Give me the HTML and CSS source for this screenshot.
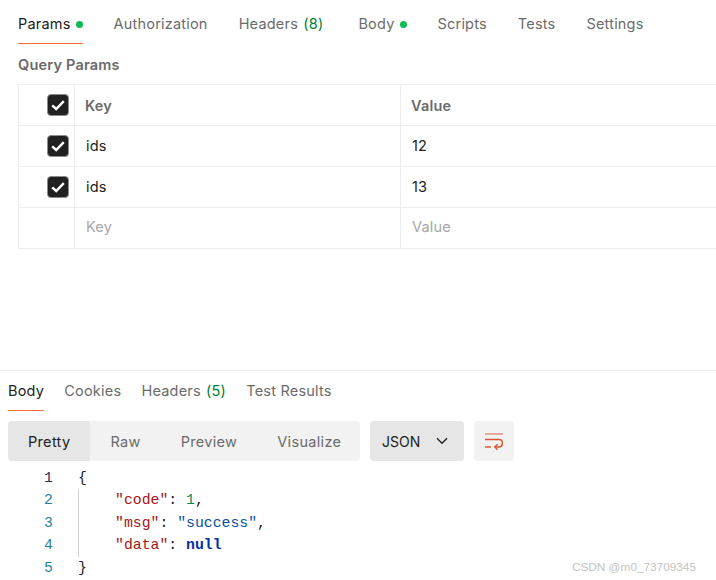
FILE: index.html
```html
<!DOCTYPE html>
<html lang="en">
<head>
<meta charset="UTF-8">
<meta name="viewport" content="width=device-width, initial-scale=1.0">
<title>Params</title>
<link rel="stylesheet" href="styles.css">
</head>
<body>

<section class="request">
  <nav class="tabs">
    <a class="tab active">Params<span class="dot"></span></a>
    <a class="tab">Authorization</a>
    <a class="tab headers">Headers <span class="count">(8)</span></a>
    <a class="tab">Body<span class="dot"></span></a>
    <a class="tab">Scripts</a>
    <a class="tab">Tests</a>
    <a class="tab">Settings</a>
  </nav>

  <h3 class="section-title">Query Params</h3>

  <div class="params">
    <div class="row head">
      <div class="cell check"><span class="checkbox"><svg width="14" height="14" viewBox="0 0 14 14"><path d="M1.2 7.4 L5.2 11 L12.8 3.2" fill="none" stroke="#fff" stroke-width="2.4"/></svg></span></div>
      <div class="cell key">Key</div>
      <div class="cell value">Value</div>
    </div>
    <div class="row">
      <div class="cell check"><span class="checkbox"><svg width="14" height="14" viewBox="0 0 14 14"><path d="M1.2 7.4 L5.2 11 L12.8 3.2" fill="none" stroke="#fff" stroke-width="2.4"/></svg></span></div>
      <div class="cell key">ids</div>
      <div class="cell value">12</div>
    </div>
    <div class="row">
      <div class="cell check"><span class="checkbox"><svg width="14" height="14" viewBox="0 0 14 14"><path d="M1.2 7.4 L5.2 11 L12.8 3.2" fill="none" stroke="#fff" stroke-width="2.4"/></svg></span></div>
      <div class="cell key">ids</div>
      <div class="cell value">13</div>
    </div>
    <div class="row empty">
      <div class="cell check"></div>
      <div class="cell key">Key</div>
      <div class="cell value">Value</div>
    </div>
  </div>
</section>

<section class="response">
  <nav class="tabs small">
    <a class="tab active">Body</a>
    <a class="tab">Cookies</a>
    <a class="tab">Headers <span class="count">(5)</span></a>
    <a class="tab">Test Results</a>
  </nav>

  <div class="toolbar">
    <div class="segments">
      <span class="segment selected">Pretty</span>
      <span class="segment">Raw</span>
      <span class="segment">Preview</span>
      <span class="segment">Visualize</span>
    </div>
    <div class="format">JSON
      <svg width="12" height="8" viewBox="0 0 12 8"><path d="M1 1.2 L6 6.2 L11 1.2" fill="none" stroke="#212121" stroke-width="1.4"/></svg>
    </div>
    <div class="wrap">
      <svg width="18" height="17" viewBox="0 0 18 17"><path d="M0 1 H18" stroke="#e08a6c" stroke-width="1.4" fill="none"/><path d="M0 6.5 H14 C18.5 6.5 18.5 14 14 14 H10" stroke="#d9532c" stroke-width="1.4" fill="none"/><path d="M12.5 11.3 L9.8 14 L12.5 16.7" stroke="#d9532c" stroke-width="1.4" fill="none"/><path d="M0 14 H6" stroke="#d9532c" stroke-width="1.4" fill="none"/></svg>
    </div>
  </div>

  <div class="code">
    <div class="line"><span class="num first">1</span><span class="text">{</span></div>
    <div class="line"><span class="num">2</span><span class="text indent"><span class="prop">"code"</span>: <span class="number">1</span>,</span></div>
    <div class="line"><span class="num">3</span><span class="text indent"><span class="prop">"msg"</span>: <span class="string">"success"</span>,</span></div>
    <div class="line"><span class="num">4</span><span class="text indent"><span class="prop">"data"</span>: <span class="null">null</span></span></div>
    <div class="line"><span class="num">5</span><span class="text">}</span></div>
  </div>
</section>

<div class="watermark">CSDN @m0_73709345</div>

</body>
</html>
```

FILE: styles.css
```css
html, body {
  height: 100%;
}
body {
  margin: 0;
  background-color: #fff;
  font-family: Inter, "Noto Sans", sans-serif;
  font-size: 14.5px;
  letter-spacing: 0.2px;
  color: #212121;
  position: relative;
  overflow: hidden;
}

.request {
  height: 370px;
  padding-top: 14px;
  box-sizing: border-box;
}

.tabs {
  display: flex;
  margin-left: 18px;
  gap: 31px;
  color: #6b6b6b;
}
.tab {
  display: block;
  height: 20px;
  line-height: 20px;
  padding-bottom: 9px;
  border-bottom: 1px solid transparent;
}
.tab.active {
  color: #212121;
  border-bottom-color: #ff6c37;
}
.tab.headers {
  margin-right: 4px;
}
.count {
  margin-left: 1px;
  color: #007f31;
}
.dot {
  display: inline-block;
  width: 7px;
  height: 7px;
  margin-left: 5px;
  border-radius: 50%;
  background-color: #0cbb52;
  vertical-align: 1px;
}

.section-title {
  margin: 12px 0 10px 18px;
  height: 18px;
  line-height: 18px;
  font-size: 14.5px;
  font-weight: 600;
  color: #6b6b6b;
}

.params {
  margin-left: 18px;
  border-top: 1px solid #ededed;
  border-left: 1px solid #ededed;
}
.row {
  display: flex;
  height: 40px;
  border-bottom: 1px solid #ededed;
}
.cell {
  display: flex;
  align-items: center;
  box-sizing: border-box;
  padding-bottom: 1px;
}
.check {
  width: 56px;
  justify-content: flex-end;
  padding-right: 5px;
  padding-bottom: 0;
  border-right: 1px solid #ededed;
}
.key {
  width: 326px;
  padding-left: 11px;
  border-right: 1px solid #ededed;
}
.value {
  flex: 1;
  padding-left: 11px;
}
.head .cell {
  padding-bottom: 0;
  font-weight: 600;
  color: #6b6b6b;
}
.head .key,
.head .value {
  padding-left: 10px;
}
.empty .cell {
  padding-bottom: 3px;
  color: #a6a6a6;
}
.checkbox {
  display: flex;
  align-items: center;
  justify-content: center;
  width: 22px;
  height: 22px;
  border: 1px solid #8c8c8c;
  border-radius: 4px;
  background-color: #212121;
  box-sizing: border-box;
}

.response {
  border-top: 1px solid #ededed;
  padding-top: 10px;
}
.tabs.small {
  margin-left: 8px;
  gap: 20.2px;
}

.toolbar {
  display: flex;
  margin: 10px 0 0 8px;
  height: 40px;
}
.segments {
  display: flex;
  width: 352px;
  border-radius: 4px;
  background-color: #f2f2f2;
  color: #6b6b6b;
  letter-spacing: 0.32px;
  overflow: hidden;
}
.segment {
  display: flex;
  align-items: center;
  padding: 0 20px;
}
.segment.selected {
  background-color: #e6e6e6;
  color: #212121;
}
.format {
  display: flex;
  align-items: center;
  justify-content: space-between;
  width: 94px;
  margin-left: 10px;
  padding: 0 16px 0 12px;
  box-sizing: border-box;
  border-radius: 4px;
  background-color: #e6e6e6;
  font-size: 14px;
  letter-spacing: 0;
}
.wrap {
  display: flex;
  align-items: center;
  justify-content: center;
  width: 40px;
  margin-left: 10px;
  border-radius: 4px;
  background-color: #f2f2f2;
}

.code {
  margin-top: 5.5px;
  font-family: "Liberation Mono", monospace;
  font-size: 14.8px;
  letter-spacing: 0;
}
.line {
  display: flex;
  height: 22.5px;
  line-height: 22.5px;
}
.num {
  width: 53px;
  text-align: right;
  color: #2a7f9e;
}
.num.first {
  color: #1f2d5c;
}
.text {
  margin-left: 25px;
  white-space: pre;
}
.indent {
  padding-left: 36px;
  border-left: 1px solid #d0d0d0;
}
.prop {
  color: #a31515;
}
.number {
  color: #098658;
}
.string {
  color: #0451a5;
}
.null {
  color: #0431a5;
  font-weight: 700;
}

.watermark {
  position: absolute;
  right: 20px;
  bottom: 6px;
  font-family: "Liberation Sans", sans-serif;
  font-size: 11.8px;
  letter-spacing: 0;
  color: #c4c4c4;
}
```
